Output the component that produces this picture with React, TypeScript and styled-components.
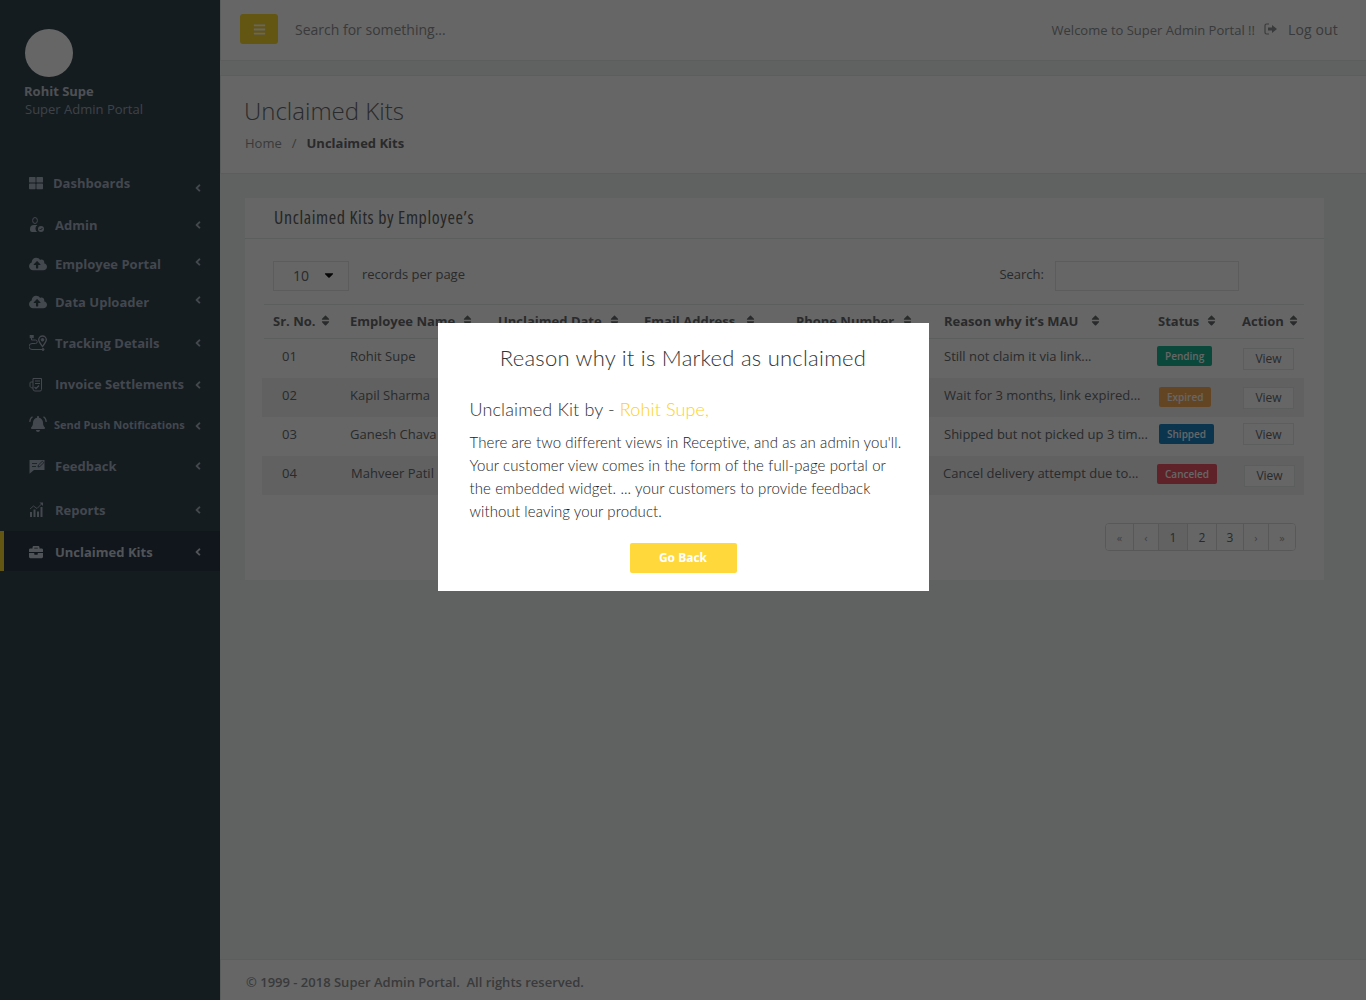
import React from 'react';
import styled, { createGlobalStyle } from 'styled-components';
import {
  FaAngleLeft,
  FaBars,
  FaBell,
  FaBriefcase,
  FaCaretDown,
  FaCloudUploadAlt,
  FaSort,
  FaThLarge,
} from 'react-icons/fa';

const GlobalStyle = createGlobalStyle`
  html, body {
    margin: 0;
    padding: 0;
    height: 100%;
    overflow: hidden;
    background: #f0f5f2;
  }
  * {
    box-sizing: border-box;
  }
`;

const Page = styled.div`
  display: flex;
  height: 1000px;
  font-family: 'Open Sans', 'Liberation Sans', sans-serif;
  font-size: 13px;
  color: #676a6c;
`;

const Sidebar = styled.aside`
  width: 220px;
  flex-shrink: 0;
  background: #344650;
`;

const Profile = styled.div`
  height: 163px;
  padding: 29px 0 0 24px;
`;

const Avatar = styled.div`
  width: 48px;
  height: 48px;
  margin-left: 1px;
  border-radius: 50%;
  background: #fff;
`;

const ProfileName = styled.div`
  margin-top: 5px;
  font-size: 13px;
  line-height: 18px;
  font-weight: 700;
  color: #c2c8d2;
`;

const ProfileRole = styled.div`
  margin: 0 0 0 1px;
  font-size: 13px;
  line-height: 18px;
  color: #99a5b3;
`;

const NavList = styled.nav`
  display: flex;
  flex-direction: column;
`;

const NavRow = styled.div<{ $height: number; $active?: boolean }>`
  display: flex;
  align-items: center;
  height: ${p => p.$height}px;
  padding: ${p => (p.$active ? '1px 16px 0 25px' : '0 16px 0 29px')};
  background: ${p => (p.$active ? '#293846' : 'transparent')};
  border-left: ${p => (p.$active ? '4px solid #f8d52f' : '0')};
  color: ${p => (p.$active ? '#c8cfdb' : '#a7b1c2')};
`;

const NavIcon = styled.span<{ $slot: number }>`
  display: flex;
  align-items: center;
  width: ${p => p.$slot}px;
  flex-shrink: 0;
  font-size: 15px;
`;

const NavLabel = styled.span<{ $small?: boolean }>`
  flex: 1;
  font-size: ${p => (p.$small ? 11 : 13)}px;
  font-weight: 700;
  white-space: nowrap;
`;

const NavChevron = styled.span<{ $shift: number }>`
  display: flex;
  font-size: 12px;
  transform: translateY(${p => p.$shift}px);
`;

const Main = styled.main`
  flex: 1;
  display: flex;
  flex-direction: column;
  min-width: 0;
`;

const TopBar = styled.header`
  display: flex;
  align-items: center;
  height: 61px;
  padding: 0 28px 2px 19px;
  background: #fff;
  border-left: 1px solid #e7eaec;
  border-bottom: 1px solid #e7eaec;
`;

const MenuButton = styled.button`
  display: flex;
  align-items: center;
  justify-content: center;
  width: 38px;
  height: 30px;
  padding: 0;
  border: 0;
  border-radius: 3px;
  background: #f8d52f;
  color: #fff;
  font-size: 13px;
`;

const SearchHint = styled.div`
  flex: 1;
  margin-left: 17px;
  font-size: 14px;
  color: #8f9294;
`;

const Welcome = styled.span`
  margin-top: 2px;
  font-size: 13px;
  color: #8f9294;
`;

const LogOut = styled.span`
  display: flex;
  align-items: center;
  margin-left: 9px;
  font-size: 14px;
  letter-spacing: 0.15px;
  color: #8f9294;
`;

const LogOutIcon = styled.svg`
  width: 13px;
  height: 12px;
  margin-right: 11px;
`;

const HeadingPanel = styled.section`
  height: 99px;
  margin-top: 14px;
  padding: 18px 23px 0;
  background: #fff;
  border-top: 1px solid #e7eaec;
  border-bottom: 1px solid #e7eaec;
  border-left: 1px solid #e7eaec;
`;

const PageTitle = styled.h2`
  margin: 0;
  font-size: 24px;
  line-height: 33px;
  font-weight: 300;
  color: #676a6c;
`;

const Breadcrumb = styled.div`
  display: flex;
  margin: 7px 0 0 1px;
  font-size: 13px;
  line-height: 18px;
  color: #8f9294;
`;

const CrumbSeparator = styled.span`
  margin: 0 10px;
`;

const CrumbCurrent = styled.strong`
  color: #676a6c;
`;

const Content = styled.div`
  flex: 1;
  padding: 24px 42px 0 25px;
`;

const Card = styled.section`
  height: 382px;
  background: #fff;
`;

const CardHeader = styled.div`
  display: flex;
  align-items: center;
  height: 41px;
  padding: 0 0 3px 29px;
  border-bottom: 1px solid #e7eaec;
`;

const CardTitle = styled.h5`
  margin: 0;
  font-size: 18px;
  font-weight: 500;
  font-stretch: 75%;
  letter-spacing: 0.6px;
  color: #5c5f61;
`;

const CardBody = styled.div`
  padding: 22px 20px 0 19px;
`;

const Controls = styled.div`
  display: flex;
  align-items: center;
  height: 43px;
  padding: 0 65px 13px 9px;
`;

const PageSize = styled.div`
  display: flex;
  align-items: center;
  justify-content: space-between;
  width: 76px;
  height: 30px;
  padding: 0 12px 2px 19px;
  border: 1px solid #e5e6e7;
  font-size: 14px;
`;

const Caret = styled.span`
  display: flex;
  font-size: 14px;
  color: #111;
`;

const ControlText = styled.span<{ $grow?: boolean }>`
  flex: ${p => (p.$grow ? 1 : 'none')};
  margin-left: ${p => (p.$grow ? 13 : 0)}px;
  padding-bottom: 4px;
  font-size: 13px;
`;

const SearchBox = styled.div`
  width: 184px;
  height: 30px;
  margin-left: 11px;
  border: 1px solid #e5e6e7;
`;

const columns = '77px 148px 146px 152px 148px 214px 84px 1fr';

const HeadRow = styled.div`
  display: grid;
  grid-template-columns: ${columns};
  align-items: center;
  height: 35px;
  padding: 0 0 2px 9px;
  border-top: 1px solid #e7eaec;
  border-bottom: 1px solid #e7eaec;
`;

const HeadCell = styled.div`
  display: flex;
  align-items: center;
  font-size: 13px;
  font-weight: 700;
  white-space: nowrap;
`;

const SortIcon = styled.span<{ $gap: number }>`
  display: flex;
  margin-left: ${p => p.$gap}px;
  font-size: 13px;
`;

const BodyRow = styled.div<{ $striped: boolean }>`
  display: grid;
  grid-template-columns: ${columns};
  align-items: center;
  height: 39px;
  margin-left: -2px;
  padding: 0 0 5px 11px;
  background: ${p => (p.$striped ? '#f3f3f4' : 'transparent')};
`;

const BodyCell = styled.div<{ $nudge?: number; $span?: number }>`
  grid-column: ${p => (p.$span ? `span ${p.$span}` : 'auto')};
  margin-left: ${p => p.$nudge ?? 0}px;
  font-size: 13px;
  white-space: nowrap;
`;

const StatusBadge = styled.span<{ $color: string; $nudge: number; $drop: number }>`
  display: block;
  width: fit-content;
  height: 20px;
  margin: ${p => p.$drop}px 0 0 ${p => p.$nudge}px;
  padding: 0 8px;
  line-height: 20px;
  border-radius: 2px;
  background: ${p => p.$color};
  color: #fff;
  font-size: 10px;
  font-weight: 600;
`;

const ViewButton = styled.button<{ $nudge: number; $drop: number }>`
  display: block;
  width: 51px;
  height: 22px;
  margin: ${p => p.$drop}px 0 0 ${p => p.$nudge}px;
  padding: 0;
  border: 1px solid #e7eaec;
  background: #fff;
  color: #676a6c;
  font-family: inherit;
  font-size: 12px;
`;

const PagerRow = styled.div`
  display: flex;
  justify-content: flex-end;
  margin-top: 28px;
  padding-right: 8px;
`;

const Pager = styled.div`
  display: flex;
  height: 28px;
  border: 1px solid #dddddd;
  border-radius: 4px;
  overflow: hidden;
`;

const PagerCell = styled.span<{ $width: number; $active?: boolean; $muted?: boolean }>`
  display: flex;
  align-items: center;
  justify-content: center;
  width: ${p => p.$width}px;
  border-left: 1px solid #dddddd;
  background: ${p => (p.$active ? '#f4f4f4' : '#fff')};
  color: ${p => (p.$muted ? '#a0a2a4' : '#676a6c')};
  font-size: ${p => (p.$muted ? 11 : 12)}px;
  &:first-child {
    border-left: 0;
  }
`;

const Footer = styled.footer`
  display: flex;
  align-items: center;
  height: 41px;
  padding: 4px 0 0 25px;
  background: #fff;
  border-top: 1px solid #e7eaec;
  border-left: 1px solid #e7eaec;
  font-size: 13px;
  font-weight: 600;
  color: #8f9294;
  white-space: pre;
`;

const Overlay = styled.div`
  position: fixed;
  inset: 0;
  display: flex;
  justify-content: center;
  align-items: flex-start;
  padding-top: 323px;
  background: rgba(0, 0, 0, 0.6);
`;

const Modal = styled.div`
  width: 491px;
  height: 268px;
  padding: 20px 28px 0 32px;
  background: #fff;
  font-family: 'Lato', 'Liberation Sans', sans-serif;
  color: #333;
`;

const ModalTitle = styled.h3`
  margin: 0 0 0 -4px;
  font-size: 22px;
  line-height: 30px;
  font-weight: 300;
  letter-spacing: 0.25px;
  text-align: center;
  white-space: nowrap;
`;

const ModalSubtitle = styled.h4`
  margin: 21px 0 0;
  font-size: 18px;
  line-height: 30px;
  font-weight: 300;
  letter-spacing: 0.13px;
`;

const Highlight = styled.span`
  color: #ffcf1a;
`;

const ModalText = styled.p`
  margin: 7px 0 0;
  font-size: 15px;
  line-height: 23px;
  font-weight: 300;
  color: #222;
  letter-spacing: 0.1px;
  white-space: nowrap;
`;

const GoBack = styled.button`
  display: block;
  width: 107px;
  height: 30px;
  margin: 20px 0 0 160px;
  padding: 0 0 2px;
  border: 0;
  border-radius: 2px;
  background: #ffd93b;
  color: #fff;
  font-family: 'Open Sans', 'Liberation Sans', sans-serif;
  font-size: 12px;
  font-weight: 700;
`;

const AdminIcon = () => (
  <svg width="16" height="16" viewBox="0 0 16 16" fill="currentColor">
    <ellipse cx="6" cy="3.5" rx="2.4" ry="3" fill="none" stroke="currentColor" strokeWidth="1" />
    <path d="M1 12a4 4 0 0 1 4-4h3.500a4 4 0 0 0 0 7H3a2 2 0 0 1-2-2z" />
    <circle cx="12" cy="12" r="3" />
    <path d="M10.600 12l1 1 1.800-2" fill="none" stroke="#344650" strokeWidth="1" />
  </svg>
);

const TrackingIcon = () => (
  <svg width="18" height="17" viewBox="0 0 18 17" fill="none" stroke="currentColor" strokeWidth="1">
    <path d="M2.500 2.500v2.500h4a1.700 1.700 0 0 1 0 3.500h-3.500a2.800 2.800 0 0 0 0 6h10" />
    <rect x="1.200" y="0.500" width="3" height="2.200" fill="currentColor" />
    <circle cx="14" cy="14.500" r="1" fill="currentColor" />
    <path d="M13.500 11.500c-2.500-3.300-3.800-4.800-3.800-6.700a3.800 3.800 0 0 1 7.600 0c0 1.900-1.300 3.400-3.800 6.700z" strokeWidth="1.300" />
    <circle cx="13.500" cy="4.800" r="1.300" fill="currentColor" />
  </svg>
);

const InvoiceIcon = () => (
  <svg width="14" height="15" viewBox="0 0 14 15" fill="none" stroke="currentColor" strokeWidth="1">
    <path d="M4 1.500h8.500v11a1.500 1.500 0 0 1-1.500 1.500H6a2 2 0 0 1-2-2z" />
    <path d="M4 5H2a1 1 0 0 0-1 1v3c0 1 1 2 3 2" />
    <path d="M6 4h5M6 6.500h5" />
    <path d="M5.500 10l1.500 1.500 3-3" strokeWidth="1.300" />
  </svg>
);

const BellRays = () => (
  <svg width="18" height="17" viewBox="0 0 18 17" fill="none" stroke="currentColor" strokeWidth="1.200">
    <path d="M.8 6A6 6 0 0 1 3.500.8M17.200 6A6 6 0 0 0 14.500.8" />
  </svg>
);

const FeedbackIcon = () => (
  <svg width="16" height="15" viewBox="0 0 16 15" fill="currentColor">
    <path d="M.5 1h15v10H5l-4.500 3.800z" />
    <path d="M3 4.500h5M3 7.500h4" stroke="#344650" strokeWidth="0.800" />
    <path d="M9 8l.4-2 4-3.800 1.500 1.500-4 3.800z" stroke="#344650" strokeWidth="0.800" />
  </svg>
);

const ReportsIcon = () => (
  <svg width="15" height="15" viewBox="0 0 15 15" fill="currentColor">
    <path d="M1 10h2v5H1zM4.500 7.500h2V15h-2zM8 9.500h2V15H8zM11.500 5h2v10h-2z" />
    <path d="M1 7l3.500-3 3.500 2.500L13 1.500" fill="none" stroke="currentColor" strokeWidth="0.900" />
    <path d="M10.500.5h3.500v3.500z" />
  </svg>
);

const navItems = [
  { label: 'Dashboards', height: 40, slot: 24, shift: 5, icon: <FaThLarge size={14} /> },
  { label: 'Admin', height: 43, slot: 26, shift: 0, icon: <AdminIcon /> },
  { label: 'Employee Portal', height: 36, slot: 26, shift: -2, icon: <FaCloudUploadAlt size={18} /> },
  { label: 'Data Uploader', height: 40, slot: 26, shift: -2, icon: <FaCloudUploadAlt size={18} /> },
  { label: 'Tracking Details', height: 42, slot: 26, shift: 0, icon: <TrackingIcon /> },
  { label: 'Invoice Settlements', height: 40, slot: 26, shift: 1, icon: <InvoiceIcon /> },
  {
    label: 'Send Push Notifications',
    height: 40,
    slot: 25,
    shift: 2,
    small: true,
    icon: (
      <>
        <BellRays />
        <FaBell size={16} style={{ marginLeft: -17 }} />
      </>
    ),
  },
  { label: 'Feedback', height: 44, slot: 26, shift: 0, icon: <FeedbackIcon /> },
  { label: 'Reports', height: 43, slot: 26, shift: 0, icon: <ReportsIcon /> },
  { label: 'Unclaimed Kits', height: 40, slot: 26, shift: 0, active: true, icon: <FaBriefcase size={14} /> },
];

const headers = [
  { label: 'Sr. No.', gap: 4 },
  { label: 'Employee Name', gap: 6 },
  { label: 'Unclaimed Date', gap: 6 },
  { label: 'Email Address', gap: 9 },
  { label: 'Phone Number', gap: 7 },
  { label: 'Reason why it’s MAU', gap: 11 },
  { label: 'Status', gap: 6 },
  { label: 'Action', gap: 3 },
];

const rows = [
  { no: '01', name: 'Rohit Supe', nameNudge: 0, reason: 'Still not claim it via link...', reasonNudge: 0, status: 'Pending', color: '#1ab394', badgeNudge: -1, badgeDrop: 0, viewNudge: 1, viewDrop: 5 },
  { no: '02', name: 'Kapil Sharma', nameNudge: 0, reason: 'Wait for 3 months, link expired...', reasonNudge: 0, status: 'Expired', color: '#f8ac59', badgeNudge: 1, badgeDrop: 4, viewNudge: 1, viewDrop: 5 },
  { no: '03', name: 'Ganesh Chava', nameNudge: 0, reason: 'Shipped but not picked up 3 tim...', reasonNudge: 0, status: 'Shipped', color: '#1c84c6', badgeNudge: 1, badgeDrop: 0, viewNudge: 1, viewDrop: 0 },
  { no: '04', name: 'Mahveer Patil', nameNudge: 1, reason: 'Cancel delivery attempt due to...', reasonNudge: -1, status: 'Canceled', color: '#ed5565', badgeNudge: -1, badgeDrop: 1, viewNudge: 2, viewDrop: 5 },
];

const pagerCells = [
  { text: '«', width: 27, muted: true },
  { text: '‹', width: 25, muted: true },
  { text: '1', width: 29, active: true },
  { text: '2', width: 29 },
  { text: '3', width: 27 },
  { text: '›', width: 25, muted: true },
  { text: '»', width: 27, muted: true },
];

export default function App() {
  return (
    <>
      <GlobalStyle />
      <Page>
        <Sidebar>
          <Profile>
            <Avatar />
            <ProfileName>Rohit Supe</ProfileName>
            <ProfileRole>Super Admin Portal</ProfileRole>
          </Profile>
          <NavList>
            {navItems.map(item => (
              <NavRow key={item.label} $height={item.height} $active={item.active}>
                <NavIcon $slot={item.slot}>{item.icon}</NavIcon>
                <NavLabel $small={item.small}>{item.label}</NavLabel>
                <NavChevron $shift={item.shift}>
                  <FaAngleLeft />
                </NavChevron>
              </NavRow>
            ))}
          </NavList>
        </Sidebar>
        <Main>
          <TopBar>
            <MenuButton>
              <FaBars />
            </MenuButton>
            <SearchHint>Search for something...</SearchHint>
            <Welcome>Welcome to Super Admin Portal !!</Welcome>
            <LogOut>
              <LogOutIcon viewBox="0 0 13 12" fill="none" stroke="currentColor">
                <path d="M5 1H2.500A1.500 1.500 0 0 0 1 2.500v7A1.500 1.500 0 0 0 2.500 11H5" strokeWidth="1.200" />
                <path d="M4 4.500h4V2l5 4-5 4V7.500H4z" fill="currentColor" stroke="none" />
              </LogOutIcon>
              Log out
            </LogOut>
          </TopBar>
          <HeadingPanel>
            <PageTitle>Unclaimed Kits</PageTitle>
            <Breadcrumb>
              <span>Home</span>
              <CrumbSeparator>/</CrumbSeparator>
              <CrumbCurrent>Unclaimed Kits</CrumbCurrent>
            </Breadcrumb>
          </HeadingPanel>
          <Content>
            <Card>
              <CardHeader>
                <CardTitle>Unclaimed Kits by Employee’s</CardTitle>
              </CardHeader>
              <CardBody>
                <Controls>
                  <PageSize>
                    10
                    <Caret>
                      <FaCaretDown />
                    </Caret>
                  </PageSize>
                  <ControlText $grow>records per page</ControlText>
                  <ControlText>Search:</ControlText>
                  <SearchBox />
                </Controls>
                <HeadRow>
                  {headers.map(header => (
                    <HeadCell key={header.label}>
                      {header.label}
                      <SortIcon $gap={header.gap}>
                        <FaSort />
                      </SortIcon>
                    </HeadCell>
                  ))}
                </HeadRow>
                {rows.map((row, index) => (
                  <BodyRow key={row.no} $striped={index % 2 === 1}>
                    <BodyCell $nudge={9}>{row.no}</BodyCell>
                    <BodyCell $nudge={row.nameNudge}>{row.name}</BodyCell>
                    <BodyCell $span={3} />
                    <BodyCell $nudge={row.reasonNudge}>{row.reason}</BodyCell>
                    <BodyCell>
                      <StatusBadge $color={row.color} $nudge={row.badgeNudge} $drop={row.badgeDrop}>
                        {row.status}
                      </StatusBadge>
                    </BodyCell>
                    <BodyCell>
                      <ViewButton $nudge={row.viewNudge} $drop={row.viewDrop}>
                        View
                      </ViewButton>
                    </BodyCell>
                  </BodyRow>
                ))}
                <PagerRow>
                  <Pager>
                    {pagerCells.map(cell => (
                      <PagerCell key={cell.text} $width={cell.width} $active={cell.active} $muted={cell.muted}>
                        {cell.text}
                      </PagerCell>
                    ))}
                  </Pager>
                </PagerRow>
              </CardBody>
            </Card>
          </Content>
          <Footer>© 1999 - 2018 Super Admin Portal.  All rights reserved.</Footer>
        </Main>
      </Page>
      <Overlay>
        <Modal>
          <ModalTitle>Reason why it is Marked as unclaimed</ModalTitle>
          <ModalSubtitle>
            Unclaimed Kit by - <Highlight>Rohit Supe,</Highlight>
          </ModalSubtitle>
          <ModalText>
            There are two different views in Receptive, and as an admin you'll.
            <br />
            Your customer view comes in the form of the full-page portal or
            <br />
            the embedded widget. ... your customers to provide feedback
            <br />
            without leaving your product.
          </ModalText>
          <GoBack>Go Back</GoBack>
        </Modal>
      </Overlay>
    </>
  );
}
